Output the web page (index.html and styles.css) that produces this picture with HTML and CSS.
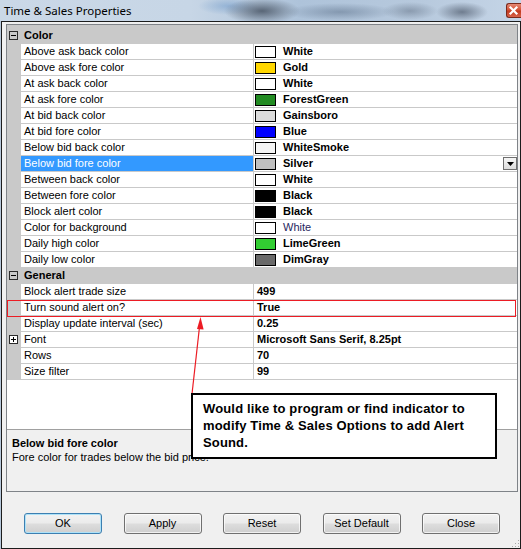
FILE: index.html
```html
<!DOCTYPE html>
<html>
<head>
<meta charset="utf-8">
<title>Time &amp; Sales Properties</title>
<link rel="stylesheet" href="styles.css">
</head>
<body>
<div class="window">
  <div class="titlebar">
    <span class="title">Time &amp; Sales Properties</span>
    <span class="close">
      <svg width="15" height="15" viewBox="0 0 15 15"><path d="M4.5 4.5 L10.5 10.5 M10.5 4.5 L4.5 10.5" stroke="#fff" stroke-width="2.2" stroke-linecap="square"/></svg>
    </span>
  </div>

  <div class="frame">
    <div class="grid">
      <div class="gridview">
        <div class="top-pad"></div>

        <div class="row cat"><span class="gut"><i class="box minus"></i></span><span class="cat-label">Color</span></div>
        <div class="row"><span class="gut"></span><span class="label">Above ask back color</span><span class="value"><i class="sw" style="background:#ffffff"></i><b>White</b></span></div>
        <div class="row"><span class="gut"></span><span class="label">Above ask fore color</span><span class="value"><i class="sw" style="background:#ffd700"></i><b>Gold</b></span></div>
        <div class="row"><span class="gut"></span><span class="label">At ask back color</span><span class="value"><i class="sw" style="background:#ffffff"></i><b>White</b></span></div>
        <div class="row"><span class="gut"></span><span class="label">At ask fore color</span><span class="value"><i class="sw" style="background:#228b22"></i><b>ForestGreen</b></span></div>
        <div class="row"><span class="gut"></span><span class="label">At bid back color</span><span class="value"><i class="sw" style="background:#dcdcdc"></i><b>Gainsboro</b></span></div>
        <div class="row"><span class="gut"></span><span class="label">At bid fore color</span><span class="value"><i class="sw" style="background:#0000ff"></i><b>Blue</b></span></div>
        <div class="row"><span class="gut"></span><span class="label">Below bid back color</span><span class="value"><i class="sw" style="background:#f5f5f5"></i><b>WhiteSmoke</b></span></div>
        <div class="row"><span class="gut"></span><span class="label selected">Below bid fore color</span><span class="value"><i class="sw" style="background:#c0c0c0"></i><b>Silver</b><span class="dropdown"><svg width="7" height="4" viewBox="0 0 7 4"><path d="M0 0 H7 L3.5 4 Z" fill="#000"/></svg></span></span></div>
        <div class="row"><span class="gut"></span><span class="label">Between back color</span><span class="value"><i class="sw" style="background:#ffffff"></i><b>White</b></span></div>
        <div class="row"><span class="gut"></span><span class="label">Between fore color</span><span class="value"><i class="sw" style="background:#000000"></i><b>Black</b></span></div>
        <div class="row"><span class="gut"></span><span class="label">Block alert color</span><span class="value"><i class="sw" style="background:#000000"></i><b>Black</b></span></div>
        <div class="row"><span class="gut"></span><span class="label">Color for background</span><span class="value"><i class="sw" style="background:#ffffff"></i><span class="default">White</span></span></div>
        <div class="row"><span class="gut"></span><span class="label">Daily high color</span><span class="value"><i class="sw" style="background:#32cd32"></i><b>LimeGreen</b></span></div>
        <div class="row"><span class="gut"></span><span class="label">Daily low color</span><span class="value"><i class="sw" style="background:#696969"></i><b>DimGray</b></span></div>

        <div class="row cat"><span class="gut"><i class="box minus"></i></span><span class="cat-label">General</span></div>
        <div class="row"><span class="gut"></span><span class="label">Block alert trade size</span><span class="value plain"><b>499</b></span></div>
        <div class="row"><span class="gut"></span><span class="label">Turn sound alert on?</span><span class="value plain"><b>True</b></span></div>
        <div class="row"><span class="gut"></span><span class="label">Display update interval (sec)</span><span class="value plain"><b>0.25</b></span></div>
        <div class="row"><span class="gut"><i class="box plus"></i></span><span class="label">Font</span><span class="value plain"><b>Microsoft Sans Serif, 8.25pt</b></span></div>
        <div class="row"><span class="gut"></span><span class="label">Rows</span><span class="value plain"><b>70</b></span></div>
        <div class="row"><span class="gut"></span><span class="label">Size filter</span><span class="value plain"><b>99</b></span></div>
      </div>

      <div class="desc">
        <div class="desc-title">Below bid fore color</div>
        <div class="desc-text">Fore color for trades below the bid price.</div>
      </div>
    </div>

    <div class="buttons">
      <button class="btn default">OK</button>
      <button class="btn">Apply</button>
      <button class="btn">Reset</button>
      <button class="btn">Set Default</button>
      <button class="btn">Close</button>
    </div>

    <svg class="grip" width="10" height="10" viewBox="0 0 10 10">
      <g fill="#a8a8a8">
        <rect x="8" y="2" width="1" height="1"/>
        <rect x="5" y="5" width="1" height="1"/><rect x="8" y="5" width="1" height="1"/>
        <rect x="2" y="8" width="1" height="1"/><rect x="5" y="8" width="1" height="1"/><rect x="8" y="8" width="1" height="1"/>
      </g>
    </svg>
  </div>

  <!-- red highlight around the sound-alert row, with a pointer from the note -->
  <svg class="marks" width="521" height="549" viewBox="0 0 521 549">
    <rect x="7.5" y="300.5" width="508" height="16" fill="none" stroke="#ec1c24" stroke-width="1"/>
    <line x1="192" y1="394" x2="199.6" y2="326" stroke="#ec1c24" stroke-width="1.2"/>
    <polygon points="200.5,317 197,329 203.6,329.6" fill="#ec1c24"/>
  </svg>

  <div class="note">Would like to program or find indicator to<br>modify Time &amp; Sales Options to add Alert<br>Sound.</div>
</div>
</body>
</html>
```

FILE: styles.css
```css
html, body {
  margin: 0;
  padding: 0;
}

body {
  width: 521px;
  height: 549px;
  overflow: hidden;
  background: #b7c8db;
  font-family: "Liberation Sans", Arial, sans-serif;
  font-size: 11px;
  color: #000;
}

.window {
  position: relative;
  width: 521px;
  height: 549px;
}

/* ---- caption bar (glass look) ---- */
.titlebar {
  height: 21px;
  display: flex;
  align-items: center;
  padding-left: 4px;
  box-sizing: border-box;
  background:
    radial-gradient(ellipse 38px 13px at 262px 11px, rgba(72, 84, 100, 0.85), rgba(72, 84, 100, 0) 100%),
    radial-gradient(ellipse 30px 9px at 228px 6px, rgba(120, 160, 205, 0.6), rgba(120, 160, 205, 0) 100%),
    radial-gradient(ellipse 55px 9px at 340px 12px, rgba(95, 115, 140, 0.55), rgba(95, 115, 140, 0) 100%),
    radial-gradient(ellipse 28px 9px at 410px 11px, rgba(95, 110, 130, 0.5), rgba(95, 110, 130, 0) 100%),
    radial-gradient(ellipse 26px 10px at 462px 12px, rgba(78, 90, 108, 0.7), rgba(78, 90, 108, 0) 100%),
    linear-gradient(to right, #cad8e7 0, #c7d6e6 190px, #aec3da 300px, #b7c9dd 420px, #c5d5e7 521px);
}

.title {
  font-family: "Noto Sans", "Open Sans", sans-serif;
  font-size: 11.5px;
  color: #000;
  line-height: 16px;
}

.close {
  margin-left: auto;
  margin-right: 0;
  width: 15px;
  height: 15px;
  align-self: flex-start;
  margin-top: 3px;
  box-sizing: border-box;
  border: 1px solid #7a2a1c;
  border-right: none;
  border-radius: 3px 0 0 3px;
  background: linear-gradient(#e58a76 0%, #d45235 45%, #c13a1f 55%, #d8634a 100%);
  display: flex;
}

.close svg {
  display: block;
  margin: -1px 0 0 -1px;
}

/* ---- dialog client area ---- */
.frame {
  position: relative;
  margin-left: 1px;
  width: 520px;
  height: 528px;
  box-sizing: border-box;
  border: 1px solid #1c1c1c;
  background: #f0f0f0;
}

.grid {
  margin: 2px 2px 0 4px;
  height: 468px;
  box-sizing: border-box;
  border: 1px solid #7f8388;
  display: flex;
  flex-direction: column;
}

.gridview {
  height: 404px;
  background: #fff;
  overflow: hidden;
}

.top-pad {
  height: 3px;
  background: #c9c9c9;
}

.row {
  display: flex;
  height: 16px;
  line-height: 15px;
  white-space: nowrap;
}

.gut {
  position: relative;
  flex: none;
  width: 14px;
  background: #c9c9c9;
}

.label {
  flex: none;
  width: 233px;
  box-sizing: border-box;
  padding-left: 3px;
  border-right: 1px solid #c9c9c9;
  border-bottom: 1px solid #c9c9c9;
  color: #000;
}

.label.selected {
  background: #3399ff;
  color: #fff;
}

.value {
  flex: 1;
  display: flex;
  align-items: flex-start;
  border-bottom: 1px solid #c9c9c9;
  min-width: 0;
}

.value.plain {
  padding-left: 3px;
}

.value b {
  font-weight: bold;
}

.value .default {
  color: #26265e;
}

.sw {
  flex: none;
  width: 21px;
  height: 12px;
  box-sizing: border-box;
  border: 1px solid #000;
  margin: 2px 7px 0 1px;
}

.dropdown {
  margin-left: auto;
  margin-top: 1px;
  width: 14px;
  height: 13px;
  box-sizing: border-box;
  border: 1px solid #6f6f6f;
  background: linear-gradient(#f6f6f6, #dcdcdc);
  display: flex;
  align-items: center;
  justify-content: center;
}

.dropdown svg {
  display: block;
  margin-top: 1px;
}

.row.cat {
  background: #c9c9c9;
}

.cat-label {
  padding-left: 3px;
  font-weight: bold;
}

/* expand / collapse boxes in the gutter */
.box {
  position: absolute;
  left: 2px;
  top: 3px;
  width: 9px;
  height: 9px;
  box-sizing: border-box;
  border: 1px solid #2b2b2b;
}

.box::before,
.box::after {
  content: "";
  position: absolute;
  background: #000;
}

.box::before {
  left: 1px;
  top: 3px;
  width: 5px;
  height: 1px;
}

.box.minus::after {
  display: none;
}

.box.plus {
  background: #fff;
}

.box.plus::after {
  left: 3px;
  top: 1px;
  width: 1px;
  height: 5px;
}

/* help pane */
.desc {
  flex: 1;
  border-top: 1px solid #a0a0a0;
  background: #f0f0f0;
  padding: 6px 0 0 5px;
  line-height: 14px;
}

.desc-title {
  font-weight: bold;
}

/* command buttons */
.buttons {
  display: flex;
  gap: 21.5px;
  margin-top: 21px;
  padding-left: 22px;
}

.btn {
  width: 78px;
  height: 21px;
  box-sizing: border-box;
  border: 1px solid #707070;
  border-radius: 3px;
  background: linear-gradient(#f2f2f2 0%, #ebebeb 48%, #dddddd 52%, #cfcfcf 100%);
  box-shadow: inset 0 0 0 1px rgba(255, 255, 255, 0.7);
  font-family: "Liberation Sans", Arial, sans-serif;
  font-size: 11px;
  color: #000;
  padding: 0;
  line-height: 19px;
}

.btn.default {
  border-color: #3c7fb1;
  box-shadow: inset 0 0 0 1px #aee2f8;
}

.grip {
  position: absolute;
  right: 0;
  bottom: 0;
  display: block;
}

/* overlays */
.marks {
  position: absolute;
  left: 0;
  top: 0;
  pointer-events: none;
}

.note {
  position: absolute;
  left: 191px;
  top: 393px;
  width: 306px;
  height: 66px;
  box-sizing: border-box;
  border: 2px solid #000;
  background: #fff;
  padding: 5px 0 0 10px;
  font-family: "Liberation Sans", Arial, sans-serif;
  font-weight: bold;
  font-size: 13px;
  line-height: 17px;
  letter-spacing: 0.15px;
  color: #000;
  white-space: nowrap;
}
```
